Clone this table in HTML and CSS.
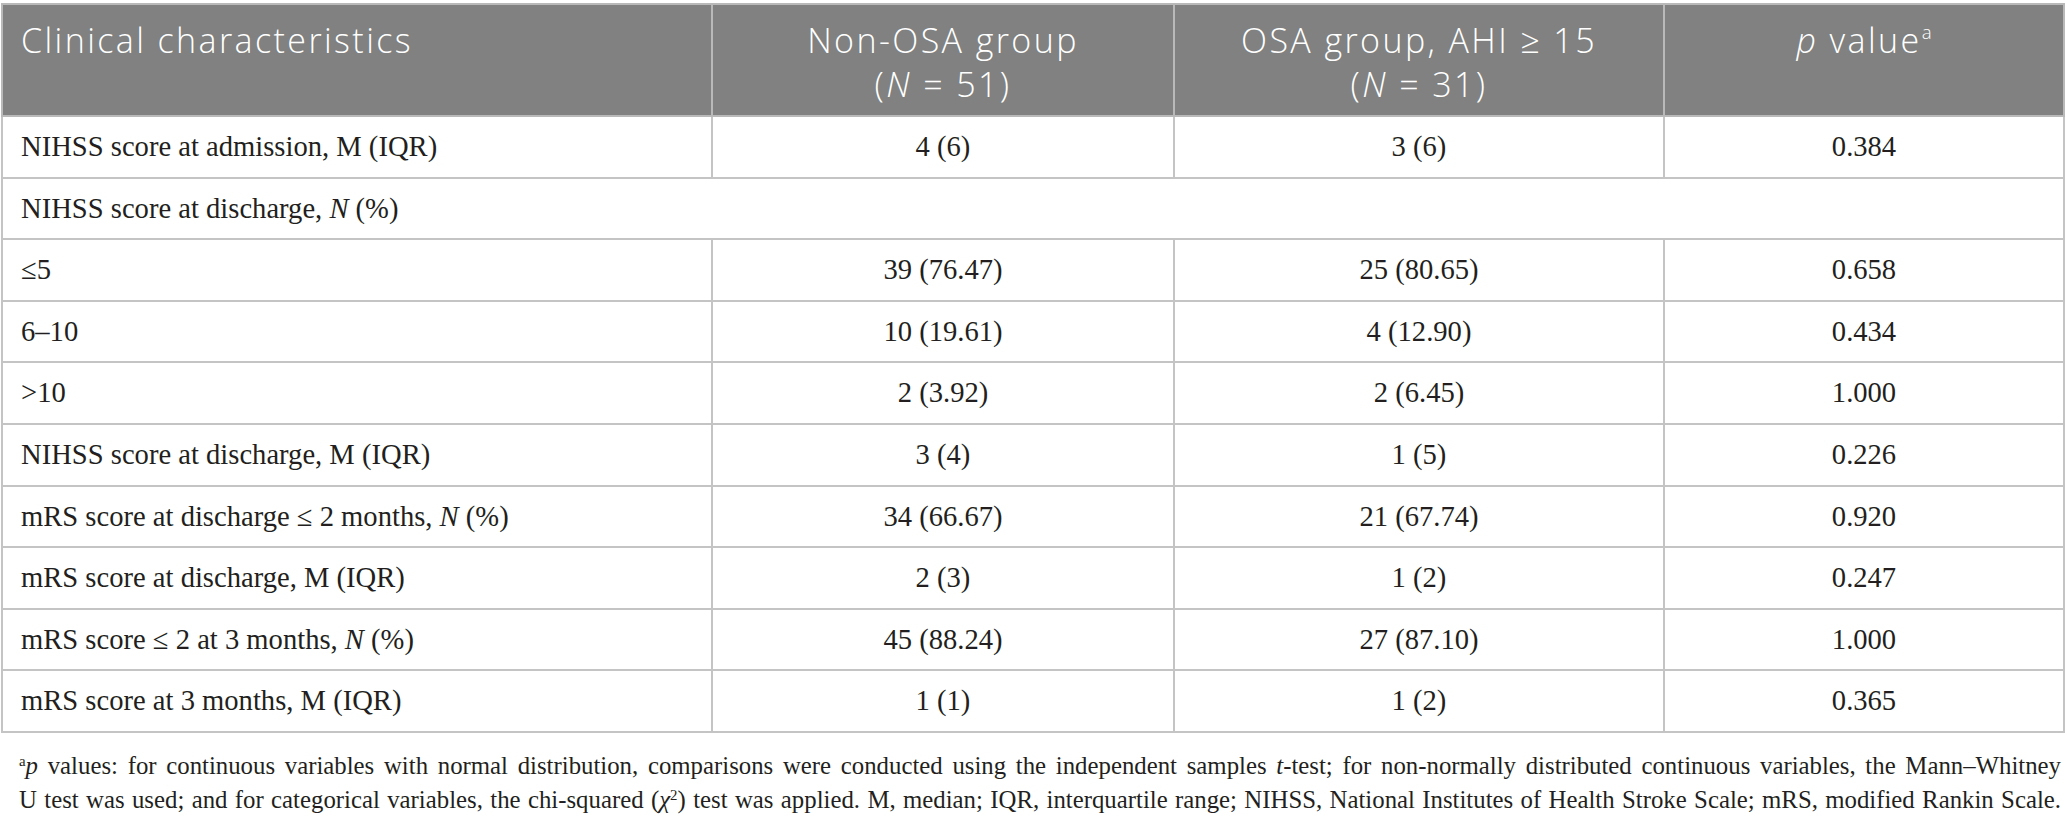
FILE: index.html
```html
<!DOCTYPE html>
<html lang="en">
<head>
<meta charset="utf-8">
<title>Clinical outcomes</title>
<link rel="stylesheet" href="styles.css">
</head>
<body>
<div class="wrap">
<table class="data">
  <colgroup>
    <col class="c1"><col class="c2"><col class="c3"><col class="c4">
  </colgroup>
  <thead>
    <tr>
      <th class="left">Clinical characteristics</th>
      <th>Non-OSA group<br>(<i>N</i> = 51)</th>
      <th>OSA group, AHI ≥ 15<br>(<i>N</i> = 31)</th>
      <th><i>p</i> value<sup>a</sup></th>
    </tr>
  </thead>
  <tbody>
    <tr><td class="left">NIHSS score at admission, M (IQR)</td><td>4 (6)</td><td>3 (6)</td><td>0.384</td></tr>
    <tr><td class="left" colspan="4">NIHSS score at discharge, <i>N</i> (%)</td></tr>
    <tr><td class="left">≤5</td><td>39 (76.47)</td><td>25 (80.65)</td><td>0.658</td></tr>
    <tr><td class="left">6–10</td><td>10 (19.61)</td><td>4 (12.90)</td><td>0.434</td></tr>
    <tr><td class="left">&gt;10</td><td>2 (3.92)</td><td>2 (6.45)</td><td>1.000</td></tr>
    <tr><td class="left">NIHSS score at discharge, M (IQR)</td><td>3 (4)</td><td>1 (5)</td><td>0.226</td></tr>
    <tr><td class="left">mRS score at discharge ≤ 2 months, <i>N</i> (%)</td><td>34 (66.67)</td><td>21 (67.74)</td><td>0.920</td></tr>
    <tr><td class="left">mRS score at discharge, M (IQR)</td><td>2 (3)</td><td>1 (2)</td><td>0.247</td></tr>
    <tr><td class="left">mRS score ≤ 2 at 3 months, <i>N</i> (%)</td><td>45 (88.24)</td><td>27 (87.10)</td><td>1.000</td></tr>
    <tr><td class="left">mRS score at 3 months, M (IQR)</td><td>1 (1)</td><td>1 (2)</td><td>0.365</td></tr>
  </tbody>
</table>
<p class="note"><sup>a</sup><i>p</i> values: for continuous variables with normal distribution, comparisons were conducted using the independent samples <i>t</i>-test; for non-normally distributed continuous variables, the Mann–Whitney<br>U test was used; and for categorical variables, the chi-squared (<i>χ</i><sup>2</sup>) test was applied. M, median; IQR, interquartile range; NIHSS, National Institutes of Health Stroke Scale; mRS, modified Rankin Scale.</p>
</div>
</body>
</html>
```
FILE: styles.css
```css
html, body {
  margin: 0;
  padding: 0;
  background: #ffffff;
}

.wrap {
  padding: 3px 2px 0 1px;
}

.data {
  width: 100%;
  border-collapse: collapse;
  table-layout: fixed;
  font-family: "Liberation Serif", "Times New Roman", serif;
  color: #231f20;
}

.c1 { width: 710px; }
.c2 { width: 462px; }
.c3 { width: 490px; }
.c4 { width: auto; }

.data th,
.data td {
  border: 2px solid #c4c4c4;
  text-align: center;
}

.data th {
  background: #808180;
  color: #ffffff;
  font-family: "Open Sans", "Noto Sans", sans-serif;
  font-weight: 300;
  font-size: 34px;
  line-height: 44px;
  letter-spacing: 2.4px;
  padding: 13px 18px 9px;
  vertical-align: top;
  border-color: #b9b9b9;
}

.data th sup {
  font-size: 55%;
  line-height: 0;
  vertical-align: 0.75em;
  letter-spacing: 0;
}

.data td {
  font-size: 28.6px;
  line-height: 40px;
  padding: 10px 18px 9.6px;
  height: 40px;
}

.data .left {
  text-align: left;
}

.note {
  margin: 16px 0 0;
  padding: 0 4px 0 18px;
  font-family: "Liberation Serif", "Times New Roman", serif;
  font-size: 24.8px;
  line-height: 34px;
  text-align: justify;
  text-align-last: justify;
  color: #231f20;
}

.note sup {
  font-size: 60%;
  line-height: 0;
  vertical-align: 0.55em;
}
```
